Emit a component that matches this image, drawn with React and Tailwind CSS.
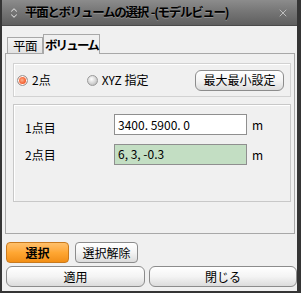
import { ChevronUp, ChevronDown, X } from 'lucide-react';

const font = { fontFamily: '"Noto Sans CJK JP", "Liberation Sans", sans-serif' };

const Radio = ({ checked, label }) => (
  <div className="flex items-center gap-[4px]">
    <span
      className={
        checked
          ? 'w-[11px] h-[11px] rounded-full border border-[#9a9a9a] bg-[radial-gradient(circle_at_45%_45%,#ffb08a_0%,#f25a2a_55%,#e04a1c_100%)] shadow-[inset_0_0_0_1px_#fff]'
          : 'w-[11px] h-[11px] rounded-full border border-[#9a9a9a] bg-[radial-gradient(circle_at_40%_35%,#ffffff_0%,#cfcfcf_60%,#a8a8a8_100%)]'
      }
    />
    <span className="text-[12px] text-black leading-none">{label}</span>
  </div>
);

const Btn = ({ children, className = '' }) => (
  <button
    className={
      'h-[21px] rounded-[4px] border border-[#8c8c8c] bg-gradient-to-b from-[#ffffff] via-[#f4f4f4] to-[#dcdcdc] text-[12px] text-black leading-none flex items-center justify-center ' +
      className
    }
  >
    {children}
  </button>
);

export default function App() {
  return (
    <div className="w-[301px] h-[293px] overflow-hidden bg-[#353535] border-l-2 border-r-4 border-b-2 border-[#353535] flex flex-col" style={font}>
      {/* title bar */}
      <div className="h-[26px] bg-gradient-to-b from-[#8c8c8c] via-[#747474] to-[#5f5f5f] flex items-center pl-[7px] pr-[8px] border-b border-[#4a4a4a]">
        <div className="flex flex-col items-center w-[10px] -space-y-[4px] text-[#d8d8d8]">
          <ChevronUp size={10} strokeWidth={2.5} />
          <ChevronDown size={10} strokeWidth={2.5} />
        </div>
        <span className="ml-[6px] text-[12.5px] font-bold text-black tracking-[-1.3px] [text-shadow:0_1px_0_rgba(255,255,255,0.25)] whitespace-nowrap">
          平面とボリュームの選択<span className="ml-[3px]">-</span>(モデルビュー)
        </span>
        <div className="flex-1" />
        <X size={12} strokeWidth={2} className="text-[#bdbdbd]" />
      </div>

      {/* body */}
      <div className="flex-1 bg-[#f0f0f0] flex flex-col">
        {/* tabs */}
        <div className="flex items-end h-[27px] pl-[5px]">
          <div className="w-[36px] h-[16px] border border-b-0 border-[#a8a8a8] bg-gradient-to-b from-[#f4f4f4] to-[#e2e2e2] text-[12.5px] leading-[15px] text-center tracking-[-0.5px]">
            平面
          </div>
          <div className="w-[57px] h-[20px] -mb-px relative z-10 border border-b-0 border-[#a8a8a8] bg-[#f0f0f0] text-[12.5px] font-bold leading-[20px] text-center tracking-[-1.8px]">
            ボリューム
          </div>
        </div>

        {/* tab panel */}
        <div className="ml-[3px] mr-[2px] h-[181px] border border-[#a8a8a8] pl-[7px] pr-[3px] pt-[9px] flex flex-col gap-[7px]">
          <div className="h-[34px] border border-[#d2d2d2] shadow-[inset_1px_1px_0_#fff] flex items-center pl-[3px] pr-[6px]">
            <Radio checked label="2点" />
            <div className="w-[36px]" />
            <Radio label="XYZ 指定" />
            <div className="flex-1" />
            <Btn className="w-[89px] rounded-[6px] text-[12.5px]">最大最小設定</Btn>
          </div>

          <div className="h-[98px] border border-[#c8c8c8] shadow-[inset_1px_1px_0_#fff] pl-[11px] pt-[9px] flex flex-col gap-[9px]">
            <div className="flex items-center h-[21px]">
              <span className="w-[89px] text-[12px] pt-[6px]">1点目</span>
              <div className="w-[133px] h-[21px] border border-[#8f8f8f] bg-white text-[12px] leading-[19px] pl-[3px]">
                3400. 5900. 0
              </div>
              <span className="ml-[5px] text-[12px]">m</span>
            </div>
            <div className="flex items-center h-[21px]">
              <span className="w-[89px] text-[12px]">2点目</span>
              <div className="w-[133px] h-[21px] border border-[#8f8f8f] bg-[#c3dec3] text-[12px] leading-[17px] pl-[3px]">
                6, 3, -0.3
              </div>
              <span className="ml-[5px] text-[12px]">m</span>
            </div>
          </div>
        </div>

        {/* buttons */}
        <div className="flex gap-[6px] pl-[4px] mt-[8px]">
          <button className="w-[63px] h-[21px] rounded-[4px] border border-[#c97a1e] bg-gradient-to-b from-[#ffc06a] via-[#ffa733] to-[#f28f15] text-[12px] font-bold leading-none">
            選択
          </button>
          <Btn className="w-[63px]">選択解除</Btn>
        </div>
        <div className="flex gap-[4px] pl-[4px] mt-[3px]">
          <Btn className="w-[139px] rounded-[6px]">適用</Btn>
          <Btn className="w-[148px] rounded-[6px]">閉じる</Btn>
        </div>
      </div>
    </div>
  );
}
